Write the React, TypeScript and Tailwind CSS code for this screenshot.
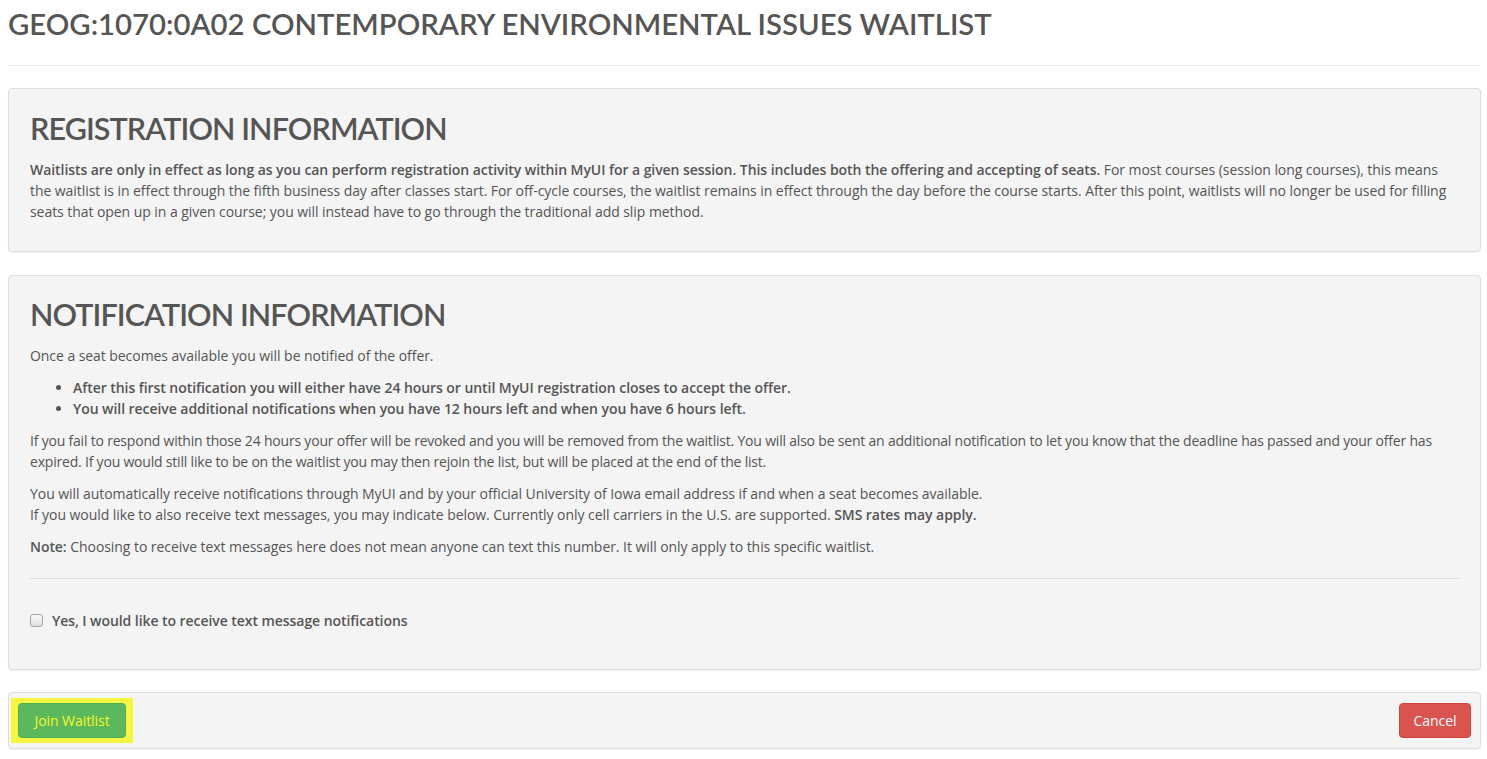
import React from "react";

export default function App() {
  return (
    <div className="min-h-[759px] bg-white pl-2 pr-[6px] text-[#555] tracking-[-0.06px] [font-family:'Open_Sans','Liberation_Sans',sans-serif]">
      <h1 className="pt-[6px] text-[29.3px] leading-[36px] font-semibold tracking-normal text-[#555] [font-family:Lato,'Liberation_Sans',sans-serif]">
        GEOG:1070:0A02 CONTEMPORARY ENVIRONMENTAL ISSUES WAITLIST
      </h1>
      <hr className="mt-[23px] border-t border-[#eee]" />

      <div className="mt-[22px] rounded border border-[#ddd] bg-[#f4f4f4] px-[21px] pt-[19px] pb-[29px] shadow-[0_1px_2px_rgba(0,0,0,0.06)]">
        <h2 className="text-[30.5px] leading-[40px] font-semibold tracking-[-0.9px] text-[#555] [font-family:Lato,'Liberation_Sans',sans-serif]">
          REGISTRATION INFORMATION
        </h2>
        <p className="mt-[11px] text-[14px] leading-[21px]">
          <b className="font-semibold">
            Waitlists are only in effect as long as you can perform registration activity within MyUI for a given session.
            This includes both the offering and accepting of seats.
          </b>{" "}
          For most courses (session long courses), this means the waitlist is in effect through the fifth business day after
          classes start. For off-cycle courses, the waitlist remains in effect through the day before the course starts. After
          this point, waitlists will no longer be used for filling seats that open up in a given course; you will instead have
          to go through the traditional add slip method.
        </p>
      </div>

      <div className="mt-[23px] rounded border border-[#ddd] bg-[#f4f4f4] px-[21px] pt-[18px] pb-[38px] shadow-[0_1px_2px_rgba(0,0,0,0.06)]">
        <h2 className="text-[30.5px] leading-[40px] font-semibold tracking-[-0.9px] text-[#555] [font-family:Lato,'Liberation_Sans',sans-serif]">
          NOTIFICATION INFORMATION
        </h2>
        <p className="mt-[11px] text-[14px] leading-[21px]">Once a seat becomes available you will be notified of the offer.</p>
        <ul className="mt-[11px] list-disc pl-[43px] text-[14px] leading-[21px] font-semibold">
          <li>After this first notification you will either have 24 hours or until MyUI registration closes to accept the offer.</li>
          <li>You will receive additional notifications when you have 12 hours left and when you have 6 hours left.</li>
        </ul>
        <p className="mt-[11px] text-[14px] leading-[21px] tracking-[-0.2px]">
          If you fail to respond within those 24 hours your offer will be revoked and you will be removed from the waitlist. You
          will also be sent an additional notification to let you know that the deadline has passed and your offer has expired.
          If you would still like to be on the waitlist you may then rejoin the list, but will be placed at the end of the list.
        </p>
        <p className="mt-[11px] text-[14px] leading-[21px]">
          You will automatically receive notifications through MyUI and by your official University of Iowa email address if
          and when a seat becomes available.
          <br />
          If you would like to also receive text messages, you may indicate below. Currently only cell carriers in the U.S. are
          supported. <b className="font-semibold">SMS rates may apply.</b>
        </p>
        <p className="mt-[11px] text-[14px] leading-[21px]">
          <b className="font-semibold">Note:</b> Choosing to receive text messages here does not mean anyone can text this
          number. It will only apply to this specific waitlist.
        </p>
        <hr className="mt-[21px] border-t border-[#ddd]" />
        <label className="mt-[31px] flex items-center text-[14px] leading-[21px] font-semibold">
          <span className="mr-[9px] inline-block h-[13px] w-[13px] rounded-[3px] border border-[#a6a6a6] bg-gradient-to-b from-[#fcfcfc] to-[#dedede]" />
          Yes, I would like to receive text message notifications
        </label>
      </div>

      <div className="mt-[22px] flex items-center justify-between rounded border border-[#ddd] bg-[#f4f4f4] py-[5px] pl-[2px] pr-[9px] shadow-[0_1px_2px_rgba(0,0,0,0.06)]">
        <div className="bg-[#f5f542] px-[7px] py-[5px]">
          <button className="h-[35px] w-[108px] rounded border border-[#4cae4c] bg-[#5cb85c] text-[14px] text-[#f7f72a]">
            Join Waitlist
          </button>
        </div>
        <button className="h-[35px] w-[72px] rounded border border-[#d43f3a] bg-[#d9534f] text-[14px] text-white">
          Cancel
        </button>
      </div>
    </div>
  );
}
